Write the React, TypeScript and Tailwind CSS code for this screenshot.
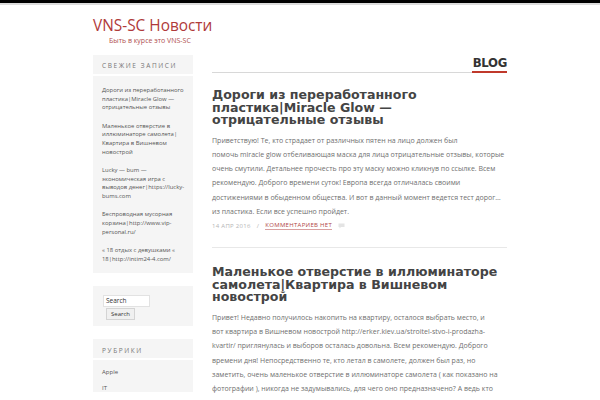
const recent = [
	'Дороги из переработанного пластика|Miracle Glow — отрицательные отзывы',
	'Маленькое отверстие в иллюминаторе самолета|Квартира в Вишневом новострой',
	'Lucky — bum — экономическая игра с выводов денег|https://lucky-bums.com',
	'Беспроводная мусорная корзина|http://www.vip-personal.ru/',
	'« 18 отдых с девушками « 18|http://intim24-4.com/',
]

const posts = [
	{
		title: 'Дороги из переработанного пластика|Miracle Glow — отрицательные отзывы',
		lines: [
			'Приветствую! Те, кто страдает от различных пятен на лицо должен был',
			'помочь miracle glow отбеливающая маска для лица отрицательные отзывы, которые',
			'очень смутили. Детальнее прочесть про эту маску можно кликнув по ссылке. Всем',
			'рекомендую. Доброго времени суток! Европа всегда отличалась своими',
			'достижениями в обыденном общества. И вот в данный момент ведется тест дорог…',
			'из пластика. Если все успешно пройдет.',
		],
	},
	{
		title: 'Маленькое отверстие в иллюминаторе самолета|Квартира в Вишневом новострой',
		lines: [
			'Привет! Недавно получилось накопить на квартиру, осталося выбрать место, и',
			'вот квартира в Вишневом новострой http://erker.kiev.ua/stroitel-stvo-i-prodazha-',
			'kvartir/ приглянулась и выборов осталась довольна. Всем рекомендую. Доброго',
			'времени дня! Непосредственно те, кто летал в самолете, должен был раз, но',
			'заметить, очень маленькое отверстие в иллюминаторе самолета ( как показано на',
			'фотографии ), никогда не задумывались, для чего оно предназначено? А ведь кто',
		],
	},
]

function CommentIcon() {
	return (
		<svg width="7" height="6" viewBox="0 0 14 12" className="ml-[6px]">
			<path d="M1 1h12v7H6l-3 3V8H1z" fill="#e4e4e4" />
		</svg>
	)
}

function Meta() {
	return (
		<div className="flex items-center text-[6px] leading-[8px] uppercase tracking-[0.3px] text-[#b5b5b5]">
			<span>14 апр 2016</span>
			<span className="mx-[6px]">/</span>
			<span className="border-b border-[#d9a0a0] text-[#b14747]">Комментариев нет</span>
			<CommentIcon />
		</div>
	)
}

function Sidebar() {
	return (
		<aside className="flex w-[100px] shrink-0 flex-col gap-[13px] text-[#555]">
			<section className="bg-[#f5f5f5]">
				<h3 className="h-[21px] border-b-2 border-white pl-[9px] pt-[7px] text-[6.5px] uppercase leading-[8px] tracking-[1.6px] text-[#777]">
					Свежие записи
				</h3>
				<ul className="flex flex-col gap-[9.5px] pb-[10px] pl-[9px] pr-[5px] pt-[10px] text-[5.9px] leading-[8.7px]">
					{recent.map((r) => (
						<li key={r} className="break-words">
							{r}
						</li>
					))}
				</ul>
			</section>
			<section className="flex h-[40px] flex-col bg-[#f5f5f5] pl-[10px] pt-[9px]">
				<div className="flex h-[12px] w-[47px] items-center border border-[#e2e2e2] bg-white pl-[2px] text-[6.5px] text-[#333]">
					Search
				</div>
				<div className="ml-[3px] mt-[1px] flex h-[12px] w-[29px] items-center justify-center border border-[#d4d4d4] bg-[#f0f0f0] text-[6px] text-[#333]">
					Search
				</div>
			</section>
			<section className="bg-[#f5f5f5]">
				<h3 className="h-[21px] border-b-2 border-white pl-[9px] pt-[8px] text-[6.5px] uppercase leading-[8px] tracking-[1.6px] text-[#777]">
					Рубрики
				</h3>
				<ul className="flex flex-col gap-[8px] px-[9px] pt-[8px] text-[6px] leading-[8px]">
					<li>Apple</li>
					<li>IT</li>
				</ul>
			</section>
		</aside>
	)
}

function Post({ title, lines }: { title: string; lines: string[] }) {
	return (
		<article className="flex flex-col">
			<h2 className="font-['DejaVu_Sans',sans-serif] text-[12.6px] font-bold leading-[12.5px] text-[#444]">
				{title}
			</h2>
			<div className="mt-[7px] text-[7px] leading-[14.3px] text-[#6f6f6f]">
				{lines.map((l) => (
					<div key={l} className="whitespace-nowrap">
						{l}
					</div>
				))}
			</div>
			<div className="mt-[2px]">
				<Meta />
			</div>
		</article>
	)
}

export default function App() {
	return (
		<div className="h-[400px] w-[600px] overflow-hidden bg-white font-['Open_Sans',sans-serif]">
			<div className="h-[3px] bg-black" />
			<div className="h-[2px] bg-[#dcdcdc]" />
			<header className="pl-[93px] pt-[12px]">
				<div className="text-[15.4px] leading-[18px] text-[#b03a3a]">VNS-SC Новости</div>
				<div className="pl-[16px] pt-[2px] text-[7px] leading-[8px] text-[#b05050]">
					Быть в курсе это VNS-SC
				</div>
			</header>
			<div className="mt-[10px] flex gap-[19px] pl-[93px]">
				<Sidebar />
				<main className="flex w-[295px] flex-col">
					<div className="flex items-end">
						<div className="flex-1 border-b border-[#d8d8d8]" />
						<div className="border-b-2 border-[#c0392b] pl-[1px] font-['DejaVu_Sans_Condensed',sans-serif] text-[13px] font-bold leading-[16px] tracking-[-0.3px] text-[#333]">
							BLOG
						</div>
					</div>
					<div className="mt-[16px]">
						<Post {...posts[0]} />
					</div>
					<div className="mt-[17px] border-t border-[#e8e8e8]" />
					<div className="mt-[18px]">
						<Post {...posts[1]} />
					</div>
				</main>
			</div>
		</div>
	)
}
